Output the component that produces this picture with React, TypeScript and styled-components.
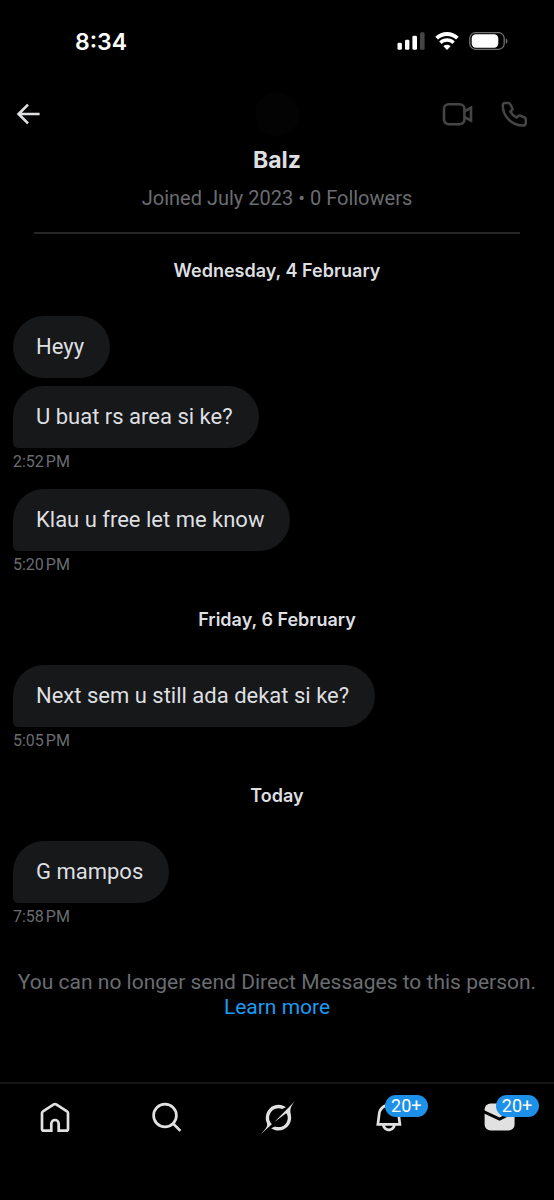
import React from 'react';
import styled, { createGlobalStyle } from 'styled-components';

const GlobalStyle = createGlobalStyle`
  *, *::before, *::after { box-sizing: border-box; }
  body {
    margin: 0;
    background: #000;
    color: #dedfe0;
    font-family: Roboto, 'Liberation Sans', sans-serif;
  }
`;

const Screen = styled.div`
  display: flex;
  flex-direction: column;
  min-height: 100vh;
`;

const StatusBar = styled.div`
  display: flex;
  align-items: center;
  justify-content: space-between;
  height: 82px;
  padding: 0 46px 0 75px;
  color: #fff;
`;

const Clock = styled.time`
  padding-top: 2px;
  font: 600 23px/30px Inter, sans-serif;
`;

const StatusIcons = styled.div`
  display: flex;
  align-items: center;
  gap: 10px;
`;

const Header = styled.header`
  display: grid;
  grid-template-columns: 1fr auto 1fr;
  align-items: center;
  padding: 10px 16px 0;
`;

const IconButton = styled.button`
  display: flex;
  padding: 0;
  border: 0;
  background: none;
  color: inherit;
  cursor: pointer;
`;

const Avatar = styled.div`
  width: 44px;
  height: 44px;
  border-radius: 50%;
  background: #030303;
`;

const CallActions = styled.div`
  display: flex;
  justify-content: flex-end;
  gap: 27px;
  padding-right: 10px;
  color: #454545;
`;

const Profile = styled.section`
  margin: 0 34px;
  padding: 8px 0 19px;
  border-bottom: 2px solid #242526;
  text-align: center;
`;

const Name = styled.h1`
  margin: 0;
  font-family: Inter, sans-serif;
  font-size: 23px;
  line-height: 32px;
  font-weight: 700;
`;

const Joined = styled.p`
  margin: 7px 0 0;
  font-size: 20px;
  line-height: 30px;
  color: #6a6d71;
`;

const Conversation = styled.main`
  padding: 0 13px;
`;

const DayLabel = styled.h2`
  margin: 0;
  padding: 29px 0 33px;
  font-family: Inter, sans-serif;
  font-size: 18px;
  line-height: 24px;
  font-weight: 600;
  text-align: center;

  &:first-child { padding-top: 25px; }
`;

const Group = styled.div`
  display: flex;
  flex-direction: column;
  align-items: flex-start;

  & + & { margin-top: 13px; }
`;

const Bubble = styled.p<{ $tail: boolean }>`
  margin: 0;
  padding: 16px 26px 16px 23px;
  border-radius: 31px;
  border-bottom-left-radius: ${({ $tail }) => ($tail ? '5px' : '31px')};
  background: #16181a;
  font-size: 22px;
  line-height: 30px;

  & + & { margin-top: 8px; }
`;

const SentAt = styled.time`
  font-size: 16px;
  line-height: 28px;
  color: #6a6d71;
`;

const Notice = styled.p`
  margin: 0;
  padding: 39px 12px 48px;
  font-size: 21px;
  line-height: 25px;
  color: #6a6d71;
  text-align: center;
`;

const MoreLink = styled.a`
  display: block;
  color: #1d9bf0;
  text-decoration: none;
`;

const TabBar = styled.nav`
  display: grid;
  grid-template-columns: repeat(5, 1fr);
  margin-top: auto;
  padding: 17px 0 66px;
  border-top: 2px solid #141516;
`;

const Tab = styled.a`
  position: relative;
  display: flex;
  justify-content: center;
  color: #e1e1e1;
`;

const Badge = styled.span`
  position: absolute;
  top: -6px;
  left: calc(50% - 3px);
  width: 43px;
  border-radius: 11px;
  background: #1d90ea;
  color: #fff;
  font-size: 18px;
  line-height: 22px;
  text-align: center;
`;

type MessageGroup = { at: string; messages: string[] };

const days: { label: string; groups: MessageGroup[] }[] = [
  {
    label: 'Wednesday, 4 February',
    groups: [
      { at: '2:52\u202fPM', messages: ['Heyy', 'U buat rs area si ke?'] },
      { at: '5:20\u202fPM', messages: ['Klau u free let me know'] },
    ],
  },
  {
    label: 'Friday, 6 February',
    groups: [{ at: '5:05\u202fPM', messages: ['Next sem u still ada dekat si ke?'] }],
  },
  { label: 'Today', groups: [{ at: '7:58\u202fPM', messages: ['G mampos'] }] },
];

const SignalIcon = () => (
  <svg width="28" height="18" viewBox="0 0 28 18" fill="currentColor" aria-hidden="true">
    <rect x="0.5" y="10.8" width="4.4" height="7" rx="1.4" />
    <rect x="8" y="7.8" width="4.4" height="10" rx="1.4" />
    <rect x="15.4" y="3.8" width="4.6" height="14" rx="1.4" />
    <rect x="23" y="0.3" width="4.6" height="17.5" rx="1.4" opacity="0.27" />
  </svg>
);

const WifiIcon = () => (
  <svg width="24" height="18" viewBox="0 0 24 18" fill="none" stroke="currentColor" aria-hidden="true">
    <path d="M1.6 6.2a15 15 0 0 1 20.8 0" strokeWidth="3.8" />
    <path d="M5.4 10.7a9.4 9.4 0 0 1 13.2 0" strokeWidth="3.4" />
    <path d="M8.4 14.2a5.2 5.2 0 0 1 7.2 0L12 17.9z" fill="currentColor" stroke="none" />
  </svg>
);

const BatteryIcon = () => (
  <svg width="39" height="18" viewBox="0 0 39 18" aria-hidden="true">
    <rect x="0.8" y="0.7" width="34.4" height="16.6" rx="5.6" fill="none" stroke="#727272" strokeWidth="1.3" />
    <rect x="2.7" y="2.3" width="26.6" height="13.4" rx="4.2" fill="#fff" />
    <path d="M36.8 6.2c2.2.9 2.2 4.7 0 5.6z" fill="#727272" />
  </svg>
);

const BackIcon = () => (
  <svg width="24" height="24" viewBox="0 0 24 24" fill="none" stroke="currentColor" strokeWidth="2.7" aria-hidden="true">
    <path d="M23.6 12H3M12 2.6 2.6 12l9.4 9.4" />
  </svg>
);

const VideoIcon = () => (
  <svg width="31" height="28" viewBox="0 0 31 28" fill="none" stroke="currentColor" strokeWidth="2.6" aria-hidden="true">
    <rect x="2" y="4.2" width="20.4" height="20" rx="4.6" />
    <path d="M22.4 11.4 29 7.8v12.8l-6.6-3.6" />
  </svg>
);

const PhoneIcon = () => (
  <svg width="28" height="28" viewBox="0 0 28 28" fill="none" stroke="currentColor" strokeWidth="2.5" strokeLinejoin="round" aria-hidden="true">
    <path d="M4.8 2.9H8.4q1.1 0 1.6 1L12.3 8q.6 1.1-.3 2L10.4 11.6q2 4 6.2 6L18.2 16q.8-.8 1.9-.4l4.6 1.9q1.1.5 1.1 1.7v3.5q0 2.9-3.1 2.9C11.5 25.6 2.8 16 2.8 5.5q0-2.6 2-2.6z" />
  </svg>
);

const HomeIcon = () => (
  <svg width="32" height="32" viewBox="0 0 32 32" fill="none" stroke="currentColor" strokeWidth="2.7" aria-hidden="true">
    <path d="M12.3 29.7V22.7a3.7 3.7 0 0 1 7.4 0v7H27a2 2 0 0 0 2-2V12a2 2 0 0 0-1-1.7L17.2 3.4a2.3 2.3 0 0 0-2.4 0L4 10.3A2 2 0 0 0 3 12v15.7a2 2 0 0 0 2 2z" />
  </svg>
);

const SearchIcon = () => (
  <svg width="32" height="32" viewBox="0 0 32 32" fill="none" stroke="currentColor" strokeWidth="2.7" aria-hidden="true">
    <circle cx="15" cy="14.5" r="11.4" />
    <path d="m22.8 22.3 7.6 7.6" />
  </svg>
);

const GrokIcon = () => (
  <svg width="34" height="33" viewBox="-1 0 33 32" fill="currentColor" overflow="visible" aria-hidden="true">
    <path d="M12.745 20.54l10.97-8.19c.539-.4 1.307-.244 1.564.38 1.349 3.288.746 7.241-1.938 9.955-2.683 2.714-6.417 3.31-9.83 1.954l-3.728 1.745c5.347 3.697 11.84 2.782 15.898-1.324 3.219-3.255 4.216-7.692 3.284-11.693l.008.009c-1.351-5.878.332-8.227 3.782-13.031L33 0l-4.54 4.59v-.014L12.743 20.544m-2.263 1.987c-3.837-3.707-3.175-9.446.1-12.755 2.42-2.449 6.388-3.448 9.852-1.979l3.72-1.737c-.67-.49-1.53-1.017-2.515-1.387-4.455-1.854-9.789-.931-13.41 2.728-3.483 3.523-4.579 8.94-2.697 13.561 1.405 3.454-.899 5.898-3.22 8.364C1.49 30.2.666 31.074 0 32l10.478-9.466" />
  </svg>
);

const BellIcon = () => (
  <svg width="33" height="33" viewBox="-1 0 24 24" fill="currentColor" aria-hidden="true">
    <path d="M19.993 9.042C19.48 5.017 16.054 2 11.996 2s-7.49 3.021-7.999 7.051L2.866 18H7.1c.463 2.282 2.481 4 4.9 4s4.437-1.718 4.9-4h4.236l-1.143-8.958zM12 20c-1.306 0-2.417-.835-2.829-2h5.658c-.412 1.165-1.523 2-2.829 2zm-6.866-4l.847-6.698C6.364 6.272 8.941 4 11.996 4s5.627 2.268 6.013 5.295L18.864 16H5.134z" />
  </svg>
);

const MailIcon = () => (
  <svg width="32" height="32" viewBox="0 0 32 32" aria-hidden="true">
    <rect x="1.6" y="2.6" width="30" height="27" rx="6" fill="currentColor" />
    <path d="M0 10.4 16.6 18 32 10.4" fill="none" stroke="#000" strokeWidth="3" />
  </svg>
);

const tabs = [
  { label: 'Home', Icon: HomeIcon },
  { label: 'Search', Icon: SearchIcon },
  { label: 'Grok', Icon: GrokIcon },
  { label: 'Notifications', Icon: BellIcon, badge: '20+' },
  { label: 'Messages', Icon: MailIcon, badge: '20+' },
];

export default function App() {
  return (
    <Screen>
      <GlobalStyle />
      <StatusBar>
        <Clock>8:34</Clock>
        <StatusIcons>
          <SignalIcon />
          <WifiIcon />
          <BatteryIcon />
        </StatusIcons>
      </StatusBar>
      <Header>
        <IconButton aria-label="Back"><BackIcon /></IconButton>
        <Avatar />
        <CallActions>
          <IconButton aria-label="Video call"><VideoIcon /></IconButton>
          <IconButton aria-label="Audio call"><PhoneIcon /></IconButton>
        </CallActions>
      </Header>
      <Profile>
        <Name>Balz</Name>
        <Joined>Joined July 2023 • 0 Followers</Joined>
      </Profile>
      <Conversation>
        {days.map((day) => (
          <React.Fragment key={day.label}>
            <DayLabel>{day.label}</DayLabel>
            {day.groups.map((group) => (
              <Group key={group.at}>
                {group.messages.map((message, i) => (
                  <Bubble key={message} $tail={i === group.messages.length - 1}>
                    {message}
                  </Bubble>
                ))}
                <SentAt>{group.at}</SentAt>
              </Group>
            ))}
          </React.Fragment>
        ))}
      </Conversation>
      <Notice>
        You can no longer send Direct Messages to this person.
        <MoreLink href="#learn-more">Learn more</MoreLink>
      </Notice>
      <TabBar>
        {tabs.map(({ label, Icon, badge }) => (
          <Tab key={label} href={`#${label.toLowerCase()}`} aria-label={label}>
            <Icon />
            {badge && <Badge>{badge}</Badge>}
          </Tab>
        ))}
      </TabBar>
    </Screen>
  );
}
